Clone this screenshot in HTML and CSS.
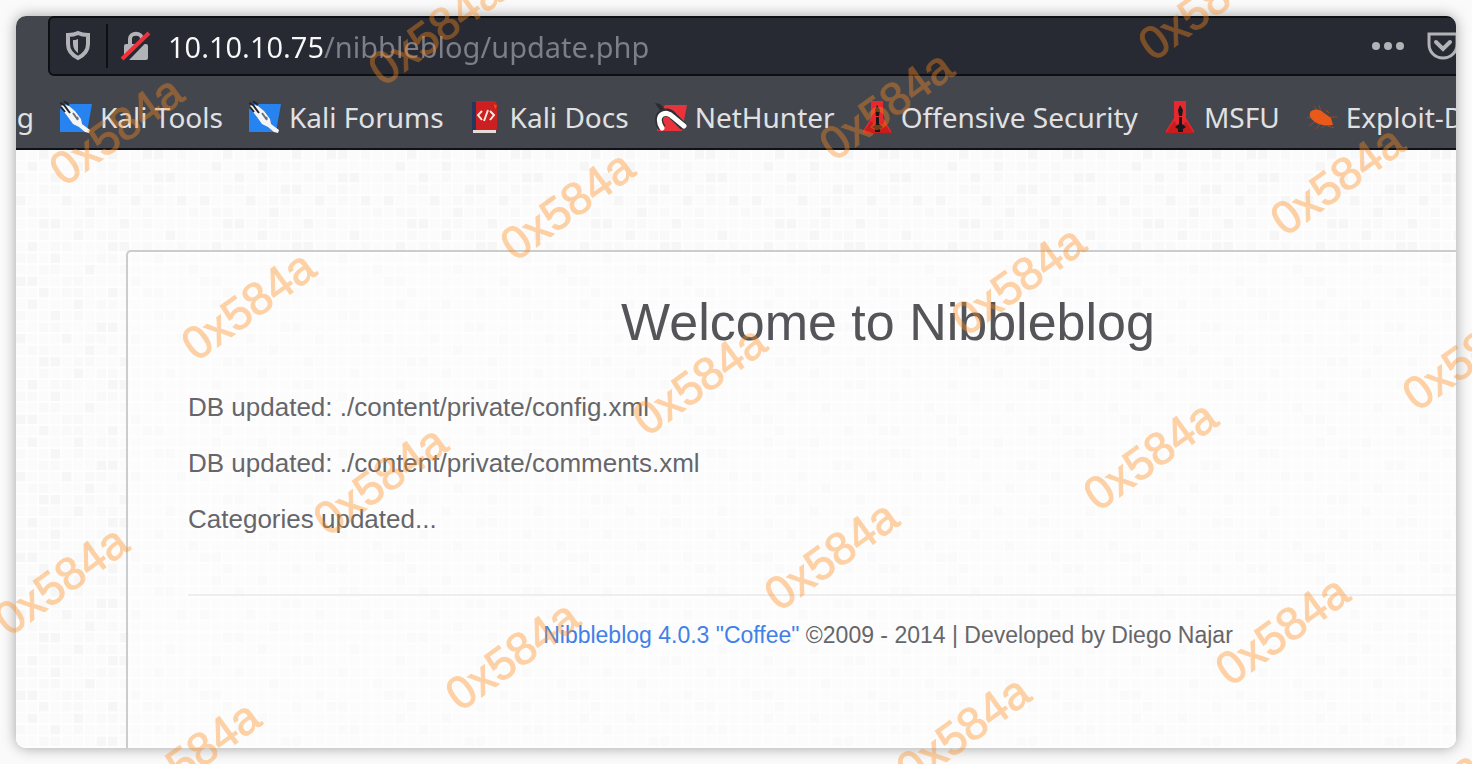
FILE: index.html
```html
<!DOCTYPE html>
<html lang="en">
<head>
    <meta charset="UTF-8">
    <meta name="viewport" content="width=device-width, initial-scale=1.0">
    <title>Nibbleblog</title>
    <link rel="stylesheet" href="styles.css">
</head>
<body>
    <!-- Shared icons -->
    <svg class="defs" aria-hidden="true">
        <symbol id="icon-kali" viewBox="0 0 32 32">
            <path d="M5 3h27l-5 28H0V8z" fill="#2783f0"/>
            <path d="M2 3l7 2 6 5 6 8 1 5 8 6-1 3-4-1-6-5-6-3-5-7-7-9z" fill="#f4f4f4"/>
            <path d="M0 2l4 2 6 8M4 0l5 4M1 6l4 5" stroke="#25262c" stroke-width="2" fill="none"/>
            <path d="M13 12l5 7M17 16l1 2" stroke="#6b7078" stroke-width="2"/>
        </symbol>
        <symbol id="icon-tower" viewBox="0 0 32 32">
            <path d="M10 0h12v17l8 13v2H2v-2l8-13z" fill="#e8282f"/>
            <path d="M10 20l-8 12h28l-8-12-3 4h-6z" fill="#c91c1c"/>
            <path d="M16 4l3 5-1 6h-3l-1-6zM15 16h3v7l4 3-3 2v3h-5v-3l-3-2 4-3z" fill="#17181c"/>
        </symbol>
    </svg>

    <div class="window">
        <div class="toolbar">
            <div class="urlbar">
                <button class="icon-button shield" aria-label="Tracking protection">
                    <svg width="28" height="32" viewBox="0 0 28 32">
                        <path d="M14 3c4 2 7 2 10 2v9c0 7-4 11-10 14C8 25 4 21 4 14V5c3 0 6 0 10-2z" fill="none" stroke="#b1b3b6" stroke-width="4"/>
                        <path d="M14 9v14c-3-2-5-5-5-9v-4c2 0 3 0 5-1z" fill="#b1b3b6"/>
                    </svg>
                </button>
                <button class="icon-button lock" aria-label="Connection is not secure">
                    <svg width="32" height="32" viewBox="0 0 32 32">
                        <path d="M10 15V9c0-7 12-7 12 0v6" fill="none" stroke="#b1b3b6" stroke-width="4"/>
                        <rect x="4" y="14" width="24" height="16" rx="2" fill="#b1b3b6"/>
                        <path d="M4 31L30 4" stroke="#282a33" stroke-width="6"/>
                        <path d="M2 29L29 3" stroke="#f0303a" stroke-width="4"/>
                    </svg>
                </button>
                <input class="url" type="text" aria-label="Address" value="10.10.10.75/nibbleblog/update.php">
                <button class="icon-button" aria-label="Page actions">
                    <svg width="34" height="32" viewBox="0 0 34 32" fill="#b1b3b6">
                        <circle cx="5" cy="16" r="4"/>
                        <circle cx="17" cy="16" r="4"/>
                        <circle cx="29" cy="16" r="4"/>
                    </svg>
                </button>
                <button class="icon-button pocket" aria-label="Save to Pocket">
                    <svg width="32" height="32" viewBox="0 0 32 32" fill="none" stroke="#b1b3b6">
                        <path d="M2 4h28v10c0 8-6 14-14 14S2 22 2 14z" stroke-width="3"/>
                        <path d="M9 12l7 7 7-7" stroke-width="4" stroke-linecap="round"/>
                    </svg>
                </button>
            </div>
        </div>

        <nav class="bookmarks">
            <a class="cut" href="#">g</a>
            <a href="#"><svg class="icon"><use href="#icon-kali"/></svg>Kali Tools</a>
            <a href="#"><svg class="icon"><use href="#icon-kali"/></svg>Kali Forums</a>
            <a href="#">
                <svg class="icon" viewBox="0 0 32 32">
                    <path d="M2 1h5v28H2z" fill="#26365c"/>
                    <path d="M6 0h19l2 3v26H6z" fill="#cb1f22"/>
                    <path d="M3 29h23v3H3z" fill="#e4dcd6"/>
                    <path d="M24 3l3 2-2 3z" fill="#e8590c"/>
                    <path d="M12 10l-4 4 4 5M20 10l4 4-4 5M18 9l-4 11" fill="none" stroke="#fbe9dc" stroke-width="2"/>
                </svg>Kali Docs
            </a>
            <a href="#">
                <svg class="icon" viewBox="0 0 32 32">
                    <path d="M10 4h22l-5 26H2V16z" fill="#e9323b"/>
                    <path d="M0 2l5 1 5 5-4 3z" fill="#292b31"/>
                    <path d="M7 27C-2 13 12 7 18 15l11 11" fill="none" stroke="#2e3037" stroke-width="8"/>
                    <path d="M7 27C-1 14 11 8 18 16l11 9" fill="none" stroke="#fff" stroke-width="5" stroke-linecap="round"/>
                </svg>NetHunter
            </a>
            <a href="#"><svg class="icon"><use href="#icon-tower"/></svg>Offensive Security</a>
            <a href="#"><svg class="icon"><use href="#icon-tower"/></svg>MSFU</a>
            <a href="#">
                <svg class="icon" viewBox="0 0 32 32">
                    <path d="M4 10l5 3M8 5l4 6M13 4l2 7M1 17l7-1M3 25l7-5M10 28l4-5M20 9l3 3M24 16l7 0M22 25l6 2M16 27l3-3" stroke="#8f4a2e" stroke-width="1"/>
                    <path d="M4 12c3-5 10-4 14 0l7 5 2 7c-7 1-14 0-18-3-4-3-6-6-5-9z" fill="#e9591a"/>
                </svg>Exploit-DB
            </a>
        </nav>

        <main class="page">
            <div class="panel">
                <h1>Welcome to Nibbleblog</h1>
                <p>DB updated: ./content/private/config.xml</p>
                <p>DB updated: ./content/private/comments.xml</p>
                <p>Categories updated...</p>
                <footer>
                    <a href="#">Nibbleblog 4.0.3 "Coffee"</a> ©2009 - 2014 | Developed by Diego Najar
                </footer>
            </div>
        </main>
    </div>

    <!-- Watermark -->
    <svg class="watermark">
        <text transform="translate(435 30) rotate(-36)">0x584a</text>
        <text transform="translate(1205 5) rotate(-36)">0x584a</text>
        <text transform="translate(116 130) rotate(-36)">0x584a</text>
        <text transform="translate(886 105) rotate(-36)">0x584a</text>
        <text transform="translate(567 205) rotate(-36)">0x584a</text>
        <text transform="translate(1337 180) rotate(-36)">0x584a</text>
        <text transform="translate(248 305) rotate(-36)">0x584a</text>
        <text transform="translate(1018 280) rotate(-36)">0x584a</text>
        <text transform="translate(699 380) rotate(-36)">0x584a</text>
        <text transform="translate(1469 355) rotate(-36)">0x584a</text>
        <text transform="translate(-71 405) rotate(-36)">0x584a</text>
        <text transform="translate(380 480) rotate(-36)">0x584a</text>
        <text transform="translate(1150 455) rotate(-36)">0x584a</text>
        <text transform="translate(61 580) rotate(-36)">0x584a</text>
        <text transform="translate(831 555) rotate(-36)">0x584a</text>
        <text transform="translate(512 655) rotate(-36)">0x584a</text>
        <text transform="translate(1282 630) rotate(-36)">0x584a</text>
        <text transform="translate(193 755) rotate(-36)">0x584a</text>
        <text transform="translate(963 730) rotate(-36)">0x584a</text>
        <text transform="translate(1414 805) rotate(-36)">0x584a</text>
    </svg>
</body>
</html>
```
FILE: styles.css
```css
* {
    box-sizing: border-box;
}
body {
    margin: 0;
    padding: 16px;
    min-height: 100vh;
    display: flex;
    background: #fafafa;
    font-family: "Liberation Sans", Arial, sans-serif;
    overflow: hidden;
}
.defs {
    display: none;
}
.window {
    flex: 1;
    min-width: 0;
    display: flex;
    flex-direction: column;
    border-radius: 10px;
    overflow: hidden;
    background: #fff;
    box-shadow: 0 0 14px rgba(0, 0, 0, 0.36);
}

/* Browser toolbar */
.toolbar {
    padding-left: 32px;
    background: #44464e;
}
.urlbar {
    display: flex;
    align-items: center;
    height: 60px;
    margin-right: -12px;
    padding-left: 14px;
    background: #282a33;
    border: 2px solid #0e0f13;
    border-radius: 6px;
}
.icon-button {
    display: flex;
    flex: none;
    padding: 0;
    border: none;
    background: none;
}
.shield {
    height: 44px;
    align-items: center;
    padding-right: 14px;
    border-right: 2px solid #0e0f13;
}
.lock {
    margin: 0 16px 0 12px;
}
.pocket {
    margin: 0 7px 0 22px;
}
.url {
    flex: 1;
    min-width: 0;
    padding: 0;
    border: none;
    outline: none;
    font: 29px "Noto Sans", sans-serif;
    /* host part is bright, path is dimmed */
    color: transparent;
    background: linear-gradient(to right, #f9f9fa 156px, #7d7e88 156px);
    -webkit-background-clip: text;
    background-clip: text;
}

/* Bookmarks */
.bookmarks {
    display: flex;
    align-items: center;
    gap: 26px;
    height: 74px;
    padding-bottom: 2px;
    padding-top: 12px;
    background: #44464e;
    border-bottom: 2px solid #101116;
    overflow: hidden;
}
.bookmarks a {
    display: flex;
    flex: none;
    align-items: center;
    gap: 8px;
    color: #e0e1e3;
    font: 28px "Noto Sans", sans-serif;
    text-decoration: none;
    white-space: nowrap;
}
.bookmarks .cut {
    width: 18px;
    justify-content: flex-end;
}
.icon {
    flex: none;
    width: 32px;
    height: 32px;
}

/* Page */
.page {
    flex: 1;
    padding: 100px 0 0 110px;
    background: #fff url("data:image/svg+xml,%3Csvg xmlns='http://www.w3.org/2000/svg' width='184' height='138' viewBox='0 0 192 144'%3E%3Cpath fill='%23fbfbfb' d='M0 0h192v144H0z'/%3E%3Cpath stroke='%23f6f6f6' stroke-width='10' d='M24 5h10M96 5h10M132 5h22M12 17h10M60 17h10M144 29h22M36 29h10M84 41h22M0 53h10M48 53h10M120 53h10M168 53h10M72 65h10M24 77h22M108 77h10M156 89h10M60 89h10M12 101h10M96 101h22M36 113h10M144 113h10M72 125h10M180 125h10M0 137h22M120 137h10'/%3E%3Cpath stroke='%23f9f9f9' stroke-width='10' d='M48 5h22M168 5h10M84 17h22M120 17h10M0 29h10M60 29h10M108 29h22M24 41h22M132 41h22M72 53h22M144 53h10M12 65h22M96 65h10M132 65h10M180 65h10M60 77h22M132 77h10M24 89h10M84 89h22M36 101h22M132 101h10M168 101h10M0 113h22M84 113h22M24 125h22M108 125h22M48 137h22M156 137h10'/%3E%3Cpath fill='none' stroke='%23fefefe' stroke-width='2' d='M11 0v144M23 0v144M35 0v144M47 0v144M59 0v144M71 0v144M83 0v144M95 0v144M107 0v144M119 0v144M131 0v144M143 0v144M155 0v144M167 0v144M179 0v144M191 0v144M0 11h192M0 23h192M0 35h192M0 47h192M0 59h192M0 71h192M0 83h192M0 95h192M0 107h192M0 119h192M0 131h192M0 143h192'/%3E%3C/svg%3E");
}
/* the panel runs past the right edge of the window */
.panel {
    height: 100%;
    margin-right: -194px;
    padding: 40px 60px 0;
    border: 2px solid #cacccd;
    border-bottom: none;
    border-radius: 5px 5px 0 0;
    background: rgba(253, 253, 253, 0.6);
    color: #66666a;
}
h1 {
    margin: 0 0 40px;
    font-size: 52px;
    font-weight: normal;
    line-height: 60px;
    text-align: center;
    color: #555559;
}
p {
    margin: 0 0 26px;
    font-size: 26px;
    line-height: 30px;
}
footer {
    margin-top: 60px;
    padding-top: 26px;
    border-top: 2px solid #eeeeee;
    font-size: 23px;
    line-height: 26px;
    text-align: center;
}
footer a {
    color: #4280e8;
    text-decoration: none;
}

.watermark {
    position: absolute;
    top: 0;
    left: 0;
    width: 100%;
    height: 100%;
    pointer-events: none;
}
.watermark text {
    font-size: 46px;
    text-anchor: middle;
    dominant-baseline: central;
    fill: #ff8c1a;
    stroke: #ff8c1a;
    stroke-width: 1px;
    opacity: 0.38;
}
```
